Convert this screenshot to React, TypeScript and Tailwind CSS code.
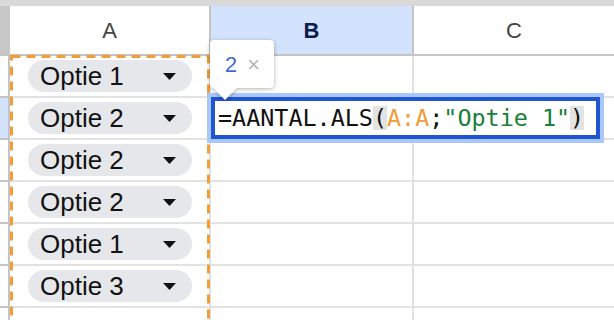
const rows: (string | null)[] = ["Optie 1", "Optie 2", "Optie 2", "Optie 2", "Optie 1", "Optie 3", null];

function Caret() {
  return (
    <svg width="13" height="7" viewBox="0 0 13 7">
      <polygon points="0,0 13,0 6.5,7" fill="#111" />
    </svg>
  );
}

function Pill({ label }: { label: string }) {
  return (
    <div className="ml-[18px] w-[164px] h-8 rounded-full bg-[#e6e7ea] flex items-center justify-between pl-3 pr-4">
      <span className="text-[26px] leading-none text-[#111]">{label}</span>
      <Caret />
    </div>
  );
}

export default function App() {
  return (
    <div className="relative w-[614px] h-[320px] overflow-hidden bg-white font-['Liberation_Sans',Arial,sans-serif]">
      {/* top band */}
      <div className="h-[6px] bg-[#d9d9d9]" />

      {/* column headers */}
      <div className="grid grid-cols-[10px_201px_203px_200px] h-[50px]">
        <div className="bg-[#c7c7c7] border-b-2 border-[#c4c4c4]" />
        <div className="border-r-2 border-b-2 border-[#c4c4c4] flex items-center justify-center text-[22px] text-[#444]">
          A
        </div>
        <div className="border-r-2 border-b-2 border-[#c4c4c4] bg-[#d3e3fd] flex items-center justify-center text-[22px] font-bold text-[#0b1d4f]">
          B
        </div>
        <div className="border-b-2 border-[#c4c4c4] flex items-center justify-center text-[22px] text-[#444]">
          C
        </div>
      </div>

      {/* rows */}
      {rows.map((label, i) => (
        <div key={i} className="grid grid-cols-[10px_201px_203px_200px] h-[42px]">
          <div
            className={
              i === 1
                ? "bg-[#d3e3fd] border-r-2 border-b-2 border-[#c4c4c4]"
                : "bg-white border-r-2 border-b-2 border-[#c4c4c4]"
            }
          />
          <div className="border-r-2 border-b-2 border-[#e2e2e2] flex items-center">
            {label && <Pill label={label} />}
          </div>
          <div className="border-r-2 border-b-2 border-[#e2e2e2]" />
          <div className="border-b-2 border-[#e2e2e2]" />
        </div>
      ))}

      {/* copied range marker */}
      <svg className="absolute left-0 top-0 pointer-events-none" width="614" height="320">
        <rect
          x="11.5"
          y="56.5"
          width="197"
          height="300"
          fill="none"
          stroke="#f29d38"
          strokeWidth="3"
          strokeDasharray="9 6"
        />
      </svg>

      {/* formula editor */}
      <div className="absolute left-[207px] top-[93px] w-[397px] h-[50px] border-4 border-[#a8c7fa]">
        <div className="h-full border-4 border-[#1f55d0] bg-white flex items-center pl-[3px] font-['DejaVu_Sans_Mono',monospace] text-[23.4px] leading-[24px] text-[#111] whitespace-nowrap">
          <span>=AANTAL.ALS</span>
          <span className="bg-[#e3e3e3]">(</span>
          <span className="text-[#f29d38]">A:A</span>
          <span>;</span>
          <span className="text-[#188038]">"Optie 1"</span>
          <span className="bg-[#e3e3e3]">)</span>
        </div>
      </div>

      {/* argument hint */}
      <div className="absolute left-[210px] top-[40px] drop-shadow-[0_1px_2px_rgba(0,0,0,0.3)]">
        <div className="w-[64px] h-[48px] bg-white rounded-[4px] flex items-center pl-[15px] gap-[10px]">
          <span className="text-[22px] text-[#3b68d8]">2</span>
          <span className="text-[22px] text-[#b4b4b4]">×</span>
        </div>
        <svg className="block ml-[3px]" width="24" height="12" viewBox="0 0 24 12">
          <polygon points="0,0 24,0 12,12" fill="#fff" />
        </svg>
      </div>
    </div>
  );
}
